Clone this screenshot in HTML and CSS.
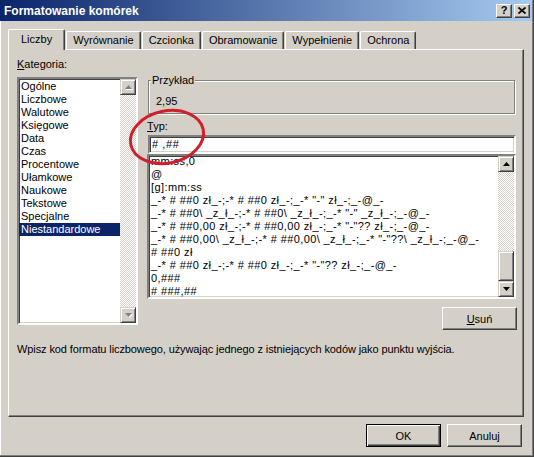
FILE: index.html
```html
<!DOCTYPE html>
<html lang="pl">

<head>
    <meta charset="UTF-8">
    <title>Formatowanie komórek</title>
    <link rel="stylesheet" href="styles.css">
</head>

<body>
    <div class="window">
        <div class="titlebar">
            <span class="title">Formatowanie komórek</span>
            <div class="caption">
                <span class="cbtn">?</span>
                <span class="cbtn">
                    <svg width="8" height="7" viewBox="0 0 8 7"><path d="M0.5 0.5L7.5 6.5M7.5 0.5L0.5 6.5" stroke="#000" stroke-width="1.7" fill="none"/></svg>
                </span>
            </div>
        </div>

        <div class="tabs">
            <span class="tab active">Liczby</span>
            <span class="tab">Wyrównanie</span>
            <span class="tab">Czcionka</span>
            <span class="tab">Obramowanie</span>
            <span class="tab">Wypełnienie</span>
            <span class="tab">Ochrona</span>
        </div>

        <div class="panel">
            <div class="cols">
                <div class="left">
                    <div class="label"><u>K</u>ategoria:</div>
                    <div class="listbox cat">
                        <ul class="items">
                            <li>Ogólne</li>
                            <li>Liczbowe</li>
                            <li>Walutowe</li>
                            <li>Księgowe</li>
                            <li>Data</li>
                            <li>Czas</li>
                            <li>Procentowe</li>
                            <li>Ułamkowe</li>
                            <li>Naukowe</li>
                            <li>Tekstowe</li>
                            <li>Specjalne</li>
                            <li class="sel">Niestandardowe</li>
                        </ul>
                        <div class="vscroll">
                            <span class="sbtn off"><svg width="7" height="4"><path d="M3.5 0L7 4H0z"/></svg></span>
                            <span class="track"></span>
                            <span class="sbtn off"><svg width="7" height="4"><path d="M0 0H7L3.5 4z"/></svg></span>
                        </div>
                    </div>
                </div>

                <div class="right">
                    <fieldset class="sample">
                        <legend>Przykład</legend>
                        <div class="sample-val">2,95</div>
                    </fieldset>
                    <div class="label"><u>T</u>yp:</div>
                    <div class="input">#&nbsp;,##</div>
                    <div class="listbox codes">
                        <ul class="items">
                            <li>mm:ss,0</li>
                            <li>@</li>
                            <li>[g]:mm:ss</li>
                            <li>_-* # ##0 zł_-;-* # ##0 zł_-;_-* "-" zł_-;_-@_-</li>
                            <li>_-* # ##0\ _z_ł_-;-* # ##0\ _z_ł_-;_-* "-" _z_ł_-;_-@_-</li>
                            <li>_-* # ##0,00 zł_-;-* # ##0,00 zł_-;_-* "-"?? zł_-;_-@_-</li>
                            <li>_-* # ##0,00\ _z_ł_-;-* # ##0,00\ _z_ł_-;_-* "-"??\ _z_ł_-;_-@_-</li>
                            <li># ##0 zł</li>
                            <li>_-* # ##0 zł_-;-* # ##0 zł_-;_-* "-"?? zł_-;_-@_-</li>
                            <li>0,###</li>
                            <li># ###,##</li>
                        </ul>
                        <div class="vscroll">
                            <span class="sbtn"><svg width="7" height="4"><path d="M3.5 0L7 4H0z"/></svg></span>
                            <span class="track"></span>
                            <span class="thumb"></span>
                            <span class="sbtn"><svg width="7" height="4"><path d="M0 0H7L3.5 4z"/></svg></span>
                        </div>
                    </div>
                    <div class="btnrow">
                        <span class="btn"><u>U</u>suń</span>
                    </div>
                </div>
            </div>
            <p class="hint">Wpisz kod formatu liczbowego, używając jednego z istniejących kodów jako punktu wyjścia.</p>
        </div>

        <div class="footer">
            <span class="btn default">OK</span>
            <span class="btn">Anuluj</span>
        </div>

        <!-- czerwone zaznaczenie -->
        <svg class="mark" width="90" height="70" viewBox="0 0 90 70">
            <ellipse cx="43" cy="33" rx="37" ry="26" transform="rotate(-12 43 33)" fill="none" stroke="#cf1f2b" stroke-width="3"/>
        </svg>
    </div>
</body>
</html>
```

FILE: styles.css
```css
* {
    margin: 0;
    padding: 0;
    box-sizing: border-box;
}

body {
    font: 11px "Liberation Sans", Arial, sans-serif;
    color: #000;
    background: #d4d0c8;
}

.window {
    position: relative;
    width: 534px;
    height: 457px;
    background: #d4d0c8;
    border-right: 1px solid #404040;
    border-bottom: 1px solid #404040;
    box-shadow: inset -1px -1px #808080, inset 1px 0 #fff;
}

.titlebar {
    display: flex;
    align-items: center;
    justify-content: space-between;
    height: 21px;
    margin-right: 1px;
    padding: 0 2px 0 4px;
    background: linear-gradient(to right, #0a246a, #a6caf0);
}

.title {
    color: #fff;
    font-weight: bold;
    font-size: 12px;
}

.caption {
    display: flex;
    gap: 2px;
}

.cbtn {
    display: flex;
    align-items: center;
    justify-content: center;
    width: 16px;
    height: 14px;
    background: #d4d0c8;
    border: 1px solid;
    border-color: #fff #404040 #404040 #fff;
    box-shadow: inset -1px -1px #808080;
    font-weight: bold;
    font-size: 11px;
    line-height: 1;
}

/* zakladki */
.tabs {
    display: flex;
    align-items: flex-end;
    height: 20px;
    margin-top: 8px;
    padding-left: 8px;
}

.tab {
    height: 18px;
    line-height: 17px;
    padding: 0 6px;
    border: 1px solid;
    border-bottom: none;
    border-color: #fff #404040 #fff #fff;
    border-radius: 2px 2px 0 0;
    box-shadow: inset -1px 0 #808080;
    margin-right: 1px;
}

.tab.active {
    position: relative;
    z-index: 1;
    height: 21px;
    line-height: 19px;
    margin-bottom: -1px;
    padding: 0 12px;
    background: #d4d0c8;
}

.panel {
    width: 516px;
    height: 368px;
    margin-left: 8px;
    padding: 8px 6px 0 8px;
    border: 1px solid;
    border-color: #fff #404040 #404040 #fff;
    box-shadow: inset -1px -1px #808080;
}

.cols {
    display: flex;
    gap: 9px;
}

.left {
    width: 121px;
}

.right {
    flex: 1;
    padding-top: 16px;
}

.label {
    line-height: 13px;
    height: 13px;
}

/* listy */
.listbox {
    display: flex;
    background: #fff;
    border: 2px solid;
    border-color: #808080 #fff #fff #808080;
    box-shadow: inset 1px 1px #404040, inset -1px -1px #d4d0c8;
    overflow: hidden;
}

.listbox .items {
    flex: 1;
    list-style: none;
    overflow: hidden;
    padding-top: 1px;
}

.items li {
    line-height: 13px;
    height: 13px;
    padding-left: 2px;
    white-space: pre;
}

.items li.sel {
    background: #0a246a;
    color: #fff;
}

.cat {
    height: 248px;
    margin-top: 6px;
}

.codes {
    height: 145px;
    margin-right: 1px;
}

.codes .items {
    padding-top: 0;
    margin-top: -1px;
    letter-spacing: 0.4px;
}

.vscroll {
    display: flex;
    flex-direction: column;
    width: 16px;
}

.sbtn {
    display: flex;
    align-items: center;
    justify-content: center;
    height: 16px;
    background: #d4d0c8;
    border: 1px solid;
    border-color: #d4d0c8 #404040 #404040 #d4d0c8;
    box-shadow: inset 1px 1px #fff, inset -1px -1px #808080;
}

.sbtn.off svg {
    fill: #808080;
    filter: drop-shadow(1px 1px 0 #fff);
}

.track {
    flex: 1;
    background: repeating-conic-gradient(#fff 0 25%, #d4d0c8 0 50%) 0 0 / 2px 2px;
}

.thumb {
    height: 30px;
    background: #d4d0c8;
    border: 1px solid;
    border-color: #d4d0c8 #404040 #404040 #d4d0c8;
    box-shadow: inset 1px 1px #fff, inset -1px -1px #808080;
}

/* przyklad */
.sample {
    height: 40px;
    margin: 0 2px 6px 1px;
    border: 1px solid #808080;
    box-shadow: inset 1px 1px #fff, 1px 1px #fff;
}

.sample legend {
    margin-left: 2px;
    padding: 0 1px;
    line-height: 13px;
    background: #d4d0c8;
}

.sample-val {
    margin-top: 8px;
    padding-left: 7px;
    line-height: 13px;
}

.input {
    height: 19px;
    margin: 2px 1px 0 1px;
    padding-left: 2px;
    line-height: 15px;
    letter-spacing: 0.6px;
    background: #fff;
    border: 2px solid;
    border-color: #808080 #fff #fff #808080;
    box-shadow: inset 1px 1px #404040, inset -1px -1px #d4d0c8;
    white-space: pre;
}

/* przyciski */
.btnrow {
    display: flex;
    justify-content: flex-end;
    margin-top: 8px;
}

.btn {
    display: flex;
    align-items: center;
    justify-content: center;
    width: 75px;
    height: 23px;
    background: #d4d0c8;
    border: 1px solid;
    border-color: #fff #404040 #404040 #fff;
    box-shadow: inset -1px -1px #808080;
}

.btn.default {
    border: 1px solid #000;
    box-shadow: inset 1px 1px #fff, inset -1px -1px #404040, inset -2px -2px #808080;
}

.hint {
    margin-top: 13px;
    line-height: 13px;
    letter-spacing: -0.1px;
}

.footer {
    display: flex;
    justify-content: flex-end;
    gap: 6px;
    margin-top: 7px;
    padding-right: 11px;
}

.mark {
    position: absolute;
    left: 124px;
    top: 104px;
}
```
